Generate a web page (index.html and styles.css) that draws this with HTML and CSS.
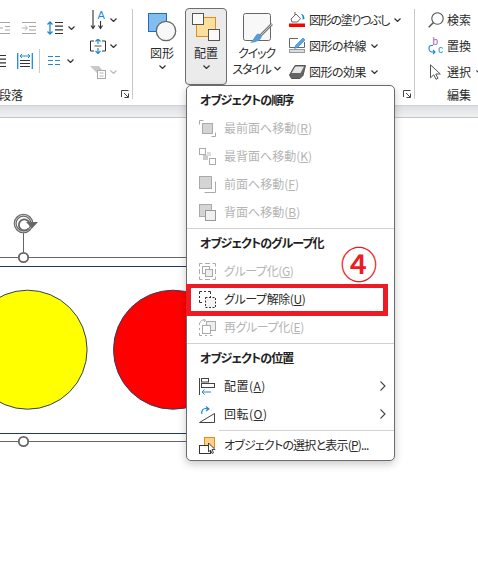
FILE: index.html
```html
<!DOCTYPE html>
<html lang="ja">
  <head>
    <meta charset="UTF-8" />
    <title>配置メニュー</title>
    <link rel="stylesheet" href="styles.css">
  </head>
  <body>
    <svg class="defs" width="0" height="0">
      <symbol id="chev" viewBox="0 0 7 4"><path d="M.5.5l3 3 3-3" fill="none" stroke="currentColor" stroke-width="1.2"/></symbol>
    </svg>

    <div class="ribbon">
      <!-- 段落 -->
      <div class="group para">
        <div class="para-top">
          <div class="para-left">
            <div class="para-row">
              <svg class="ic-outdent" width="10" height="14" viewBox="0 0 10 14"><path d="M0 1.500h10M5 5.500h5M5 9h5M0 12.500h10M0 7h3" stroke="#a6a6a6" fill="none"/></svg>
              <svg class="ic-indent" width="14" height="14" viewBox="0 0 14 14"><path d="M0 1.500h14M7 5.500h7M7 9h7M0 12.500h14" stroke="#a6a6a6" fill="none"/><path d="M0 7h5M3 4.500L5.500 7 3 9.500" stroke="#b0b0b0" fill="none"/></svg>
              <svg class="ic-spacing" width="16" height="14" viewBox="0 0 16 14"><path d="M3 1v12M.5 3.500L3 1l2.500 2.500M.5 10.500L3 13l2.500-2.500" stroke="#1e8ad6" stroke-width="1.300" fill="none"/><path d="M8 1.500h8M8 5.200h8M8 8.800h8M8 12.500h8" stroke="#333" stroke-width="1.200"/></svg>
              <svg class="chev chev-a"><use href="#chev"/></svg>
            </div>
            <div class="para-row">
              <svg width="6" height="14" viewBox="0 0 6 14"><path d="M0 1.500h6M0 5.200h6M0 8.800h6M0 12.500h6" stroke="#333" stroke-width="1.200"/></svg>
              <svg class="ic-distribute" width="16" height="16" viewBox="0 0 16 16"><path d="M.7 0v16M15.300 0v16" stroke="#1e8ad6" stroke-width="1.300"/><path d="M3 3h10M5 1L3 3l2 2M11 1l2 2-2 2" stroke="#1e8ad6" fill="none"/><path d="M3 7.500h10M3 10.500h10M3 13.500h10" stroke="#333"/></svg>
              <span class="mini-sep"></span>
              <svg class="ic-cols" width="12" height="9" viewBox="0 0 12 9"><path d="M0 .5h5M7 .5h5M0 4.500h5M7 4.500h5M0 8.500h5M7 8.500h5" stroke="#1e8ad6"/></svg>
              <svg class="chev chev-b"><use href="#chev"/></svg>
            </div>
          </div>
          <div class="para-right">
            <div class="row">
              <svg width="18" height="22" viewBox="0 0 18 22"><path d="M4 1v19M2 16.500L4 19.500 6 16.500M11.500 12v8M9.500 16.500l2 3 2-3" stroke="#333" stroke-width="1.100" fill="none"/><text class="svg-a" x="8.500" y="10">A</text></svg>
              <svg class="chev chev-c"><use href="#chev"/></svg>
            </div>
            <div class="row">
              <svg width="16" height="15" viewBox="0 0 16 15"><path d="M4 2H.5v10H4M12 2h3.500v10H12" stroke="#333" fill="none"/><path d="M8 0v5M5.500 2.500L8 0l2.500 2.500M8 9v5.500M5.500 12L8 14.500 10.500 12" stroke="#1e8ad6" stroke-width="1.200" fill="none"/><path d="M4.500 7h7" stroke="#555"/></svg>
              <svg class="chev chev-c"><use href="#chev"/></svg>
            </div>
            <div class="row">
              <svg width="16" height="14" viewBox="0 0 16 14"><path d="M0 1h9l3 4H7v3z" fill="#c9c9c9"/><rect x="7.500" y="5.500" width="8" height="8" fill="#fff" stroke="#a8a8a8"/><path d="M9.500 8h4M9.500 11h4" stroke="#b5b5b5"/></svg>
              <svg class="chev chev-c chev-off"><use href="#chev"/></svg>
            </div>
          </div>
        </div>
        <div class="group-foot">
          <span class="group-label para-label">段落</span>
          <svg class="launcher" width="8" height="8" viewBox="0 0 8 8"><path d="M.5 7V.5H7.500M3 3l4 4M7.500 3.500v4h-4" stroke="#444" fill="none"/></svg>
        </div>
      </div>
      <div class="sep"></div>

      <!-- 図形の書式 -->
      <div class="group shapes">
        <div class="shapes-top">
          <div class="large large-shape">
            <svg width="29" height="29" viewBox="0 0 29 29"><rect x=".5" y=".5" width="18" height="18" fill="#83bdf0" stroke="#1a6fbb"/><circle cx="18" cy="18" r="9.700" fill="#f8f8f8" stroke="#666" stroke-width="1.300"/></svg>
            <span class="large-label">図形</span>
            <svg class="chev"><use href="#chev"/></svg>
          </div>
          <div class="large large-on">
            <svg width="29" height="29" viewBox="0 0 29 29"><rect x="4.500" y="4.500" width="19" height="19" fill="#fbdf9c" stroke="#e38b1e"/><rect x=".5" y=".5" width="11" height="11" fill="#fafafa" stroke="#555"/><rect x="16.500" y="16.500" width="11" height="11" fill="#fafafa" stroke="#555"/></svg>
            <span class="large-label">配置</span>
            <svg class="chev"><use href="#chev"/></svg>
          </div>
          <div class="large large-quick">
            <svg width="31" height="31" viewBox="0 0 31 31"><rect x=".5" y=".5" width="27" height="27" rx="2" fill="#f8f8f8" stroke="#666"/><path d="M29 11L17 23" stroke="#777" stroke-width="2.600"/><path d="M29 11L17 23" stroke="#ddd" stroke-width=".8"/><path d="M14 21c3-1 5 1 4.500 3.500C17 28 11 30 7 30c3-2 4-6 7-9z" fill="#5b9bd5"/></svg>
            <span class="large-label kana-tight">クイック</span>
            <span class="large-label kana-tight second">スタイル<svg class="chev chev-inline"><use href="#chev"/></svg></span>
          </div>
          <div class="fmt-rows">
            <div class="row">
              <svg class="fmt-icon" width="17" height="16" viewBox="0 0 17 16"><path d="M2 7l5-5 4.500 4.500-3 3.500H3z" fill="#fff" stroke="#666"/><path d="M6 3V0" stroke="#666"/><path d="M12 2c2 0 3.500 1.500 3.500 5l-2 .5C14 5 13.500 3.500 12 2z" fill="#1e7fc8"/><rect y="11.500" width="16" height="3.500" fill="#f00"/></svg>
              <span class="fill-label">図形の塗りつぶし</span>
              <svg class="chev chev-row"><use href="#chev"/></svg>
            </div>
            <div class="row">
              <svg class="fmt-icon" width="17" height="16" viewBox="0 0 17 16"><path d="M9 .5H.5v9h15V4" fill="none" stroke="#666"/><path d="M14 0l2 2-7.500 7.500-3 1 1-3z" fill="#5aa7e0" stroke="#1e7fc8" stroke-width=".6"/><rect x=".5" y="11.500" width="15" height="3" fill="#ddd" stroke="#999"/></svg>
              <span class="fmt-label">図形の枠線</span>
              <svg class="chev chev-row"><use href="#chev"/></svg>
            </div>
            <div class="row">
              <svg class="fmt-icon" width="17" height="14" viewBox="0 0 17 14"><path d="M6 .5h10.500l-2.500 10-3 3H2.500L.5 10z" fill="#666" stroke="#555"/><path d="M6.500 1.500h8.500L11.500 8H2.500z" fill="#e8e8e8"/></svg>
              <span class="fmt-label">図形の効果</span>
              <svg class="chev chev-row"><use href="#chev"/></svg>
            </div>
          </div>
        </div>
        <div class="group-foot">
          <svg class="launcher" width="8" height="8" viewBox="0 0 8 8"><path d="M.5 7V.5H7.500M3 3l4 4M7.500 3.500v4h-4" stroke="#444" fill="none"/></svg>
        </div>
      </div>
      <div class="sep"></div>

      <!-- 編集 -->
      <div class="group editing">
        <div class="edit-rows">
          <div class="row">
            <svg class="edit-icon" width="16" height="16" viewBox="0 0 16 16"><circle cx="9.500" cy="6.500" r="5.700" fill="none" stroke="#555" stroke-width="1.100"/><path d="M5.500 10.500L.7 15.300" stroke="#555" stroke-width="1.500"/></svg>
            <span>検索</span>
          </div>
          <div class="row">
            <svg class="edit-icon" width="16" height="20" viewBox="0 0 16 20"><text class="svg-b" x="4.400" y="9">b</text><text class="svg-c" x="10" y="17">c</text><path d="M5 9.500H3C1.500 9.500 1 11 1 12.500S2 16 4 16h3M5 14l2 2-2 2" fill="none" stroke="#1e8ad6" stroke-width="1.100"/></svg>
            <span>置換</span>
          </div>
          <div class="row">
            <svg class="edit-icon" width="16" height="16" viewBox="0 0 16 16"><path d="M2.500.8v13l3.300-3 2.200 4.500 2-1-2.200-4.300h4.500z" fill="#fff" stroke="#555"/></svg>
            <span>選択</span>
            <svg class="chev chev-row"><use href="#chev"/></svg>
          </div>
        </div>
        <div class="group-foot"><span class="group-label edit-label">編集</span></div>
      </div>
    </div>
    <div class="band"></div>

    <svg class="canvas" width="478" height="444" viewBox="0 118 478 444">
      <path d="M0 257.500h186M0 441.500h186" stroke="#666" stroke-width="1"/>
      <path d="M0 266.500h186M0 433.500h186" stroke="#1f3864" stroke-width="1"/>
      <circle cx="27.600" cy="349.700" r="59.500" fill="#ff0" stroke="#2f3f5f"/>
      <circle cx="173" cy="349.700" r="59.500" fill="#f00" stroke="#2f3f5f"/>
      <path d="M23.500 232v20" stroke="#666"/>
      <circle cx="23.500" cy="257.500" r="4.700" fill="#fff" stroke="#666" stroke-width="1.800"/>
      <circle cx="23.500" cy="441.500" r="4.700" fill="#fff" stroke="#666" stroke-width="1.800"/>
      <circle cx="23.500" cy="223.500" r="8.300" fill="#fff" stroke="#666" stroke-width="3"/>
      <circle cx="23.500" cy="223.500" r="8.300" fill="none" stroke="#ddd" stroke-width=".8"/>
      <path d="M28.500 228.500a5.500 5.500 0 1 1 .8-6" fill="none" stroke="#666" stroke-width="1.800"/>
      <path d="M26 222h12l-6 6.500z" fill="#666"/>
    </svg>

    <div class="menu">
      <div class="menu-head">オブジェクトの順序</div>
      <div class="menu-item off">
        <svg width="17" height="17" viewBox="0 0 17 17"><path d="M.5 4.500v-4h4M12.500 16.500h4v-4" fill="none" stroke="#aaa"/><rect x="3.500" y="3.500" width="10" height="10" fill="#d4d4d4" stroke="#aaa"/></svg>
        <span>最前面へ移動(<u>R</u>)</span>
      </div>
      <div class="menu-item off">
        <svg width="17" height="17" viewBox="0 0 17 17"><rect x=".5" y=".5" width="6" height="6" fill="#fff" stroke="#aaa"/><rect x="10.500" y="10.500" width="6" height="6" fill="#fff" stroke="#aaa"/><rect x="4" y="7" width="5" height="5" fill="#ccc"/><rect x="8" y="4" width="4" height="4" fill="#ddd"/></svg>
        <span>最背面へ移動(<u>K</u>)</span>
      </div>
      <div class="menu-item off">
        <svg width="17" height="17" viewBox="0 0 17 17"><path d="M16.500 5.500v11h-11" fill="none" stroke="#aaa"/><rect x=".5" y=".5" width="12" height="12" fill="#d4d4d4" stroke="#aaa"/></svg>
        <span>前面へ移動(<u>F</u>)</span>
      </div>
      <div class="menu-item off">
        <svg width="17" height="17" viewBox="0 0 17 17"><rect x=".5" y=".5" width="12" height="12" fill="#d4d4d4" stroke="#aaa"/><rect x="6.500" y="6.500" width="10" height="10" fill="#f0f0f0" stroke="#999"/></svg>
        <span>背面へ移動(<u>B</u>)</span>
      </div>
      <div class="menu-sep"></div>

      <div class="menu-head">オブジェクトのグループ化</div>
      <div class="menu-item off">
        <svg width="17" height="17" viewBox="0 0 17 17"><path d="M.5 3.500v-3h3M13.500.5h3v3M16.500 13.500v3h-3M3.500 16.500h-3v-3M6 .5h5M6 16.500h5M.5 6v5M16.500 6v5" fill="none" stroke="#aaa"/><rect x="3.500" y="3.500" width="7" height="7" fill="#fff" stroke="#aaa"/><rect x="6.500" y="6.500" width="7" height="7" fill="#eee" stroke="#aaa"/></svg>
        <span class="kana">グループ化(<u>G</u>)</span>
      </div>
      <div class="menu-item">
        <svg width="17" height="17" viewBox="0 0 17 17"><path d="M.5 3V.5H3M5 .5h2M9 .5h2.500V3M11.500 5v1M.5 5v2M.5 9v2.500H3" fill="none" stroke="#333"/><rect x="6.500" y="6.500" width="10" height="10" fill="#f4f4f4" stroke="#333" stroke-dasharray="2 1.500"/></svg>
        <span class="kana">グループ解除(<u>U</u>)</span>
      </div>
      <div class="menu-item off">
        <svg width="17" height="17" viewBox="0 0 17 17"><path d="M.5 6V4M.5 11V9M.5 14v2.500H3M6 16.500h2M11 16.500h2.500" fill="none" stroke="#aaa"/><rect x="7.500" y="2.500" width="9" height="9" fill="#eee" stroke="#aaa"/><rect x="3.500" y="6.500" width="8" height="8" fill="#fff" stroke="#aaa"/><path d="M1 4c0-2 2-3.500 5-3M4.500-.5L6.500 1 5 3" fill="none" stroke="#aaa"/></svg>
        <span class="kana">再グループ化(<u>E</u>)</span>
      </div>
      <div class="menu-sep"></div>

      <div class="menu-head">オブジェクトの位置</div>
      <div class="menu-item has-sub">
        <svg width="17" height="17" viewBox="0 0 17 17"><path d="M.5 0v17" stroke="#444"/><rect x="2.500" y=".5" width="7" height="3.500" fill="#fff" stroke="#444"/><rect x="2.500" y="5.500" width="13" height="4" fill="#fff" stroke="#444"/><path d="M3 14h9M5.500 11.500L3 14l2.500 2.500" fill="none" stroke="#1e8ad6"/></svg>
        <span class="wide">配置(<u>A</u>)</span>
        <svg class="sub-arrow" width="6" height="10" viewBox="0 0 6 10"><path d="M.5.500L5 5 .5 9.500" fill="none" stroke="#444" stroke-width="1.100"/></svg>
      </div>
      <div class="menu-item has-sub">
        <svg width="17" height="17" viewBox="0 0 17 17"><path d="M.5 16.500l15-9v9z" fill="#fff" stroke="#444"/><path d="M3 8C2 5 4 2 7.500 2.500L9.500 4M7 .5L10 3 7 5" fill="none" stroke="#1e8ad6" stroke-width="1.100"/></svg>
        <span class="wide">回転(<u>O</u>)</span>
        <svg class="sub-arrow" width="6" height="10" viewBox="0 0 6 10"><path d="M.5.500L5 5 .5 9.500" fill="none" stroke="#444" stroke-width="1.100"/></svg>
      </div>
      <div class="menu-sep menu-sep-short"></div>
      <div class="menu-item">
        <svg width="17" height="17" viewBox="0 0 17 17"><rect x="5.500" y=".5" width="10" height="10" fill="#fbd28a" stroke="#e38b1e"/><rect x=".5" y="8.500" width="11" height="8" fill="#fff" stroke="#333"/><path d="M9.500 6v9l2-2 1.500 3.500 1.500-.7-1.500-3.300h3z" fill="#fff" stroke="#333" stroke-width=".9"/></svg>
        <span class="select-label">オブジェクトの選択と表示(<u>P</u>)...</span>
      </div>

      <div class="mark-box"></div>
      <div class="mark-num">④</div>
    </div>
  </body>
</html>
```

FILE: styles.css
```css
* {
  margin: 0;
  padding: 0;
  box-sizing: border-box;
}

body {
  position: relative;
  width: 478px;
  height: 562px;
  overflow: hidden;
  background: #fff;
  color: #2b2b2b;
  font-family: "Noto Sans CJK JP", "Noto Sans", sans-serif;
  font-size: 12px;
  line-height: 17px;
  font-feature-settings: "palt";
}

svg {
  display: block;
  flex: none;
}

.defs {
  position: absolute;
}

.chev {
  width: 7px;
  height: 4px;
  color: #333;
}

.chev-off {
  color: #bbb;
}

/* リボン */
.ribbon {
  display: flex;
  height: 101px;
  margin-top: 4px;
  background: #fff;
  overflow: hidden;
}

.group {
  display: flex;
  flex-direction: column;
  flex: none;
}

.sep {
  flex: none;
  width: 1px;
  margin: 5px 0 6px;
  background: #c9c9c9;
}

.group-foot {
  display: flex;
  align-items: center;
  height: 16px;
}

.launcher {
  margin-left: auto;
  margin-right: 3px;
}

.row {
  display: flex;
  align-items: center;
  height: 26px;
  white-space: nowrap;
}

.row span {
  margin-bottom: 2px;
}

/* 段落 */
.para {
  width: 132px;
}

.para-top {
  display: flex;
  height: 82px;
}

.para-left {
  width: 89px;
  padding-top: 7px;
}

.para-row {
  display: flex;
  align-items: center;
  height: 33px;
}

.ic-indent {
  margin-left: 12px;
}

.ic-spacing {
  margin-left: 11px;
}

.chev-a {
  margin-left: 5px;
}

.ic-distribute {
  margin-left: 11px;
}

.mini-sep {
  width: 1px;
  height: 24px;
  margin-left: 6px;
  background: #c9c9c9;
}

.ic-cols {
  margin-left: 8px;
}

.chev-b {
  margin-left: 7px;
}

.para-right {
  padding-top: 3px;
}

.para-right .row {
  width: 28px;
}

.para-right .row svg:first-child {
  width: 18px;
}

.chev-c {
  margin-left: 3px;
}

.svg-a {
  font-size: 11px;
  fill: #1e8ad6;
  font-family: "Liberation Sans", sans-serif;
}

.para-label {
  margin-left: -1px;
}

/* 図形の書式 */
.shapes {
  width: 281px;
}

.shapes-top {
  display: flex;
  height: 82px;
  padding-left: 10px;
}

.large {
  display: flex;
  flex-direction: column;
  align-items: center;
  height: 77px;
  margin-top: 4px;
  padding-top: 4px;
  border: 1px solid transparent;
  border-radius: 4px;
}

.large-shape {
  width: 38px;
}

.large-on {
  width: 42px;
  margin-left: 4px;
  background: #ebebeb;
  border-color: #6e6e6e;
}

.large-quick {
  width: 50px;
  margin-left: 4px;
  padding-left: 1px;
}

.large-quick svg:first-child {
  margin-left: 3px;
  height: 31px;
}

.large-label {
  display: flex;
  align-items: center;
  margin-top: 2px;
  height: 17px;
  white-space: nowrap;
}

.kana-tight {
  letter-spacing: -1.2px;
}

.large-quick .large-label {
  margin-top: 0;
}

.large-label.second {
  margin-top: -1px;
}

.large > .chev {
  margin-top: 4px;
}

.chev-inline {
  margin-left: 5px;
}

.fmt-rows {
  margin-left: 8px;
  padding-top: 3px;
}

.fmt-icon {
  margin-right: 3px;
}

.fill-label {
  letter-spacing: -1.3px;
}

.fmt-label {
  letter-spacing: -0.5px;
}

.chev-row {
  margin-left: 5px;
}

/* 編集 */
.editing {
  width: 63px;
}

.edit-rows {
  height: 82px;
  padding: 3px 0 0 13px;
}

.edit-icon {
  margin-right: 3px;
}

.edit-label {
  margin-left: 32px;
}

.svg-b,
.svg-c {
  font-family: "Liberation Sans", sans-serif;
  font-size: 10px;
}

.svg-b {
  fill: #a05cc4;
}

.svg-c {
  fill: #1e8ad6;
}

.band {
  height: 13px;
  background: linear-gradient(#dcdfe2, #eef0f2);
  border-bottom: 1px solid #c4c4c4;
  box-shadow: inset 0 1px 1px rgba(0, 0, 0, 0.06);
}

.canvas {
  background: #fff;
}

/* ドロップダウンメニュー */
.menu {
  position: absolute;
  left: 186px;
  top: 85px;
  width: 209px;
  height: 376px;
  background: #fff;
  border: 1px solid #6b6b6b;
  border-radius: 5px;
  box-shadow: 0 3px 8px rgba(0, 0, 0, 0.22);
}

.menu-head {
  height: 28px;
  padding-left: 13px;
  font-weight: 700;
  line-height: 28px;
  letter-spacing: -0.9px;
  color: #222;
}

.menu-item {
  display: flex;
  align-items: center;
  height: 28px;
  padding-left: 12px;
  white-space: nowrap;
}

.menu-item span {
  margin-bottom: 2px;
}

.menu-item svg:first-child {
  margin-right: 8px;
}

.menu-item .kana {
  letter-spacing: -0.4px;
}

.menu-item .wide {
  letter-spacing: 0.5px;
}

.menu-item .select-label {
  letter-spacing: -0.8px;
}

.menu-item.off {
  color: #b4b4b4;
}

.sub-arrow {
  margin-left: auto;
  margin-right: 8px;
}

.menu-sep {
  height: 1px;
  margin-top: 2px;
  background: #d2d2d2;
}

.menu-sep-short {
  margin-left: 32px;
}

/* 赤い注記 */
.mark-box {
  position: absolute;
  left: -1px;
  top: 198px;
  width: 202px;
  height: 32px;
  border: solid #ed1c24;
  border-width: 4px 5px 5px;
}

.mark-num {
  position: absolute;
  left: 150px;
  top: 155px;
  width: 44px;
  text-align: center;
  font-size: 37px;
  line-height: 44px;
  font-weight: 500;
  color: #ed1c24;
}
```
